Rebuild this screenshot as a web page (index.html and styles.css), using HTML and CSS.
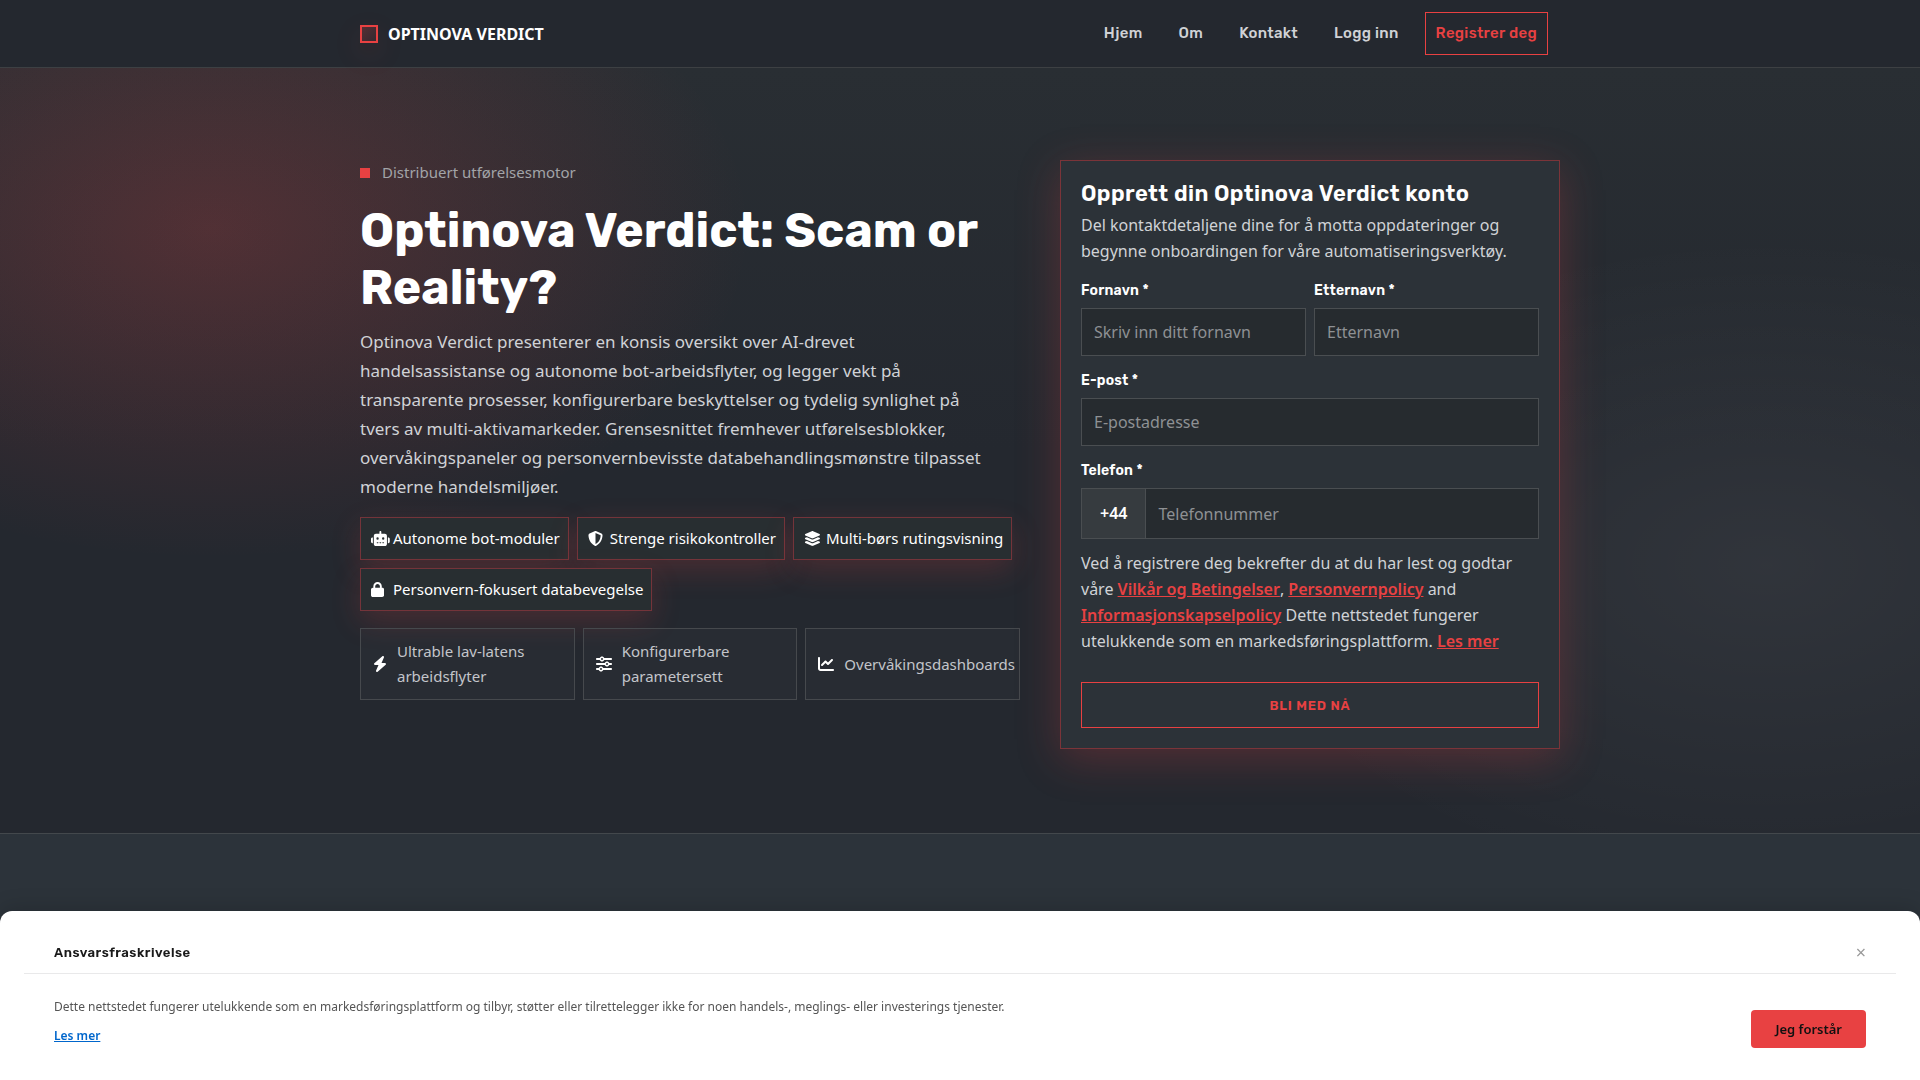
FILE: index.html
```html
<!DOCTYPE html>
<html lang="no">
<head>
    <meta charset="UTF-8">
    <meta name="viewport" content="width=device-width, initial-scale=1.0">
    <title>Optinova Verdict</title>
    <link rel="stylesheet" href="styles.css">
</head>
<body>
    <header class="site-header">
        <div class="container header-inner">
            <a class="brand" href="#"><span class="brand-mark"></span>OPTINOVA VERDICT</a>
            <nav class="nav">
                <a href="#">Hjem</a>
                <a href="#">Om</a>
                <a href="#">Kontakt</a>
                <a href="#">Logg inn</a>
                <a class="nav-cta" href="#signup">Registrer deg</a>
            </nav>
        </div>
    </header>

    <main>
        <section class="hero">
            <div class="container hero-grid">
                <div class="hero-content">
                    <div class="eyebrow">Distribuert utførelsesmotor</div>
                    <h1>Optinova Verdict: Scam or Reality?</h1>
                    <p class="lead">Optinova Verdict presenterer en konsis oversikt over AI-drevet handelsassistanse og autonome bot-arbeidsflyter, og legger vekt på transparente prosesser, konfigurerbare beskyttelser og tydelig synlighet på tvers av multi-aktivamarkeder. Grensesnittet fremhever utførelsesblokker, overvåkingspaneler og personvernbevisste databehandlingsmønstre tilpasset moderne handelsmiljøer.</p>
                    <ul class="chips">
                        <li>
                            <span class="chip-icon"><svg class="icon" viewBox="0 0 640 512"><path d="M320 0c17.7 0 32 14.3 32 32V96H472c39.8 0 72 32.2 72 72V440c0 39.8-32.2 72-72 72H168c-39.8 0-72-32.2-72-72V168c0-39.8 32.2-72 72-72H288V32c0-17.7 14.3-32 32-32zM208 384c-8.8 0-16 7.2-16 16s7.2 16 16 16h32c8.8 0 16-7.2 16-16s-7.2-16-16-16H208zm96 0c-8.8 0-16 7.2-16 16s7.2 16 16 16h32c8.8 0 16-7.2 16-16s-7.2-16-16-16H304zm96 0c-8.8 0-16 7.2-16 16s7.2 16 16 16h32c8.8 0 16-7.2 16-16s-7.2-16-16-16H400zM264 256a40 40 0 1 0 -80 0 40 40 0 1 0 80 0zm152 40a40 40 0 1 0 0-80 40 40 0 1 0 0 80zM48 224H64V416H48c-26.5 0-48-21.5-48-48V272c0-26.5 21.5-48 48-48zm544 0c26.5 0 48 21.5 48 48v96c0 26.5-21.5 48-48 48H576V224h16z"/></svg></span>
                            Autonome bot-moduler
                        </li>
                        <li>
                            <span class="chip-icon"><svg class="icon" viewBox="0 0 512 512"><path d="M256 0c4.6 0 9.2 1 13.4 2.9L457.7 82.8c22 9.3 38.4 31 38.3 57.2c-.5 99.2-41.3 280.7-213.6 363.2c-16.7 8-36.1 8-52.8 0C57.3 420.7 16.5 239.2 16 140c-.1-26.2 16.3-47.9 38.3-57.2L242.7 2.9C246.8 1 251.4 0 256 0zm0 66.8V444.8C394 378 431.1 230.1 432 141.4L256 66.8z"/></svg></span>
                            Strenge risikokontroller
                        </li>
                        <li>
                            <span class="chip-icon"><svg class="icon" viewBox="0 0 576 512"><path d="M264.5 5.2c14.9-6.9 32.1-6.9 47 0l218.6 101c8.5 3.9 13.9 12.4 13.9 21.8s-5.4 17.9-13.9 21.8l-218.6 101c-14.9 6.9-32.1 6.9-47 0L45.9 149.8C37.4 145.8 32 137.3 32 128s5.4-17.9 13.9-21.8L264.5 5.2zM476.9 209.6l53.2 24.6c8.5 3.9 13.9 12.4 13.9 21.8s-5.4 17.9-13.9 21.8l-218.6 101c-14.9 6.9-32.1 6.9-47 0L45.9 277.8C37.4 273.8 32 265.3 32 256s5.4-17.9 13.9-21.8l53.2-24.6 152 70.2c23.4 10.8 50.4 10.8 73.8 0l152-70.2zm-152 198.2l152-70.2 53.2 24.6c8.5 3.9 13.9 12.4 13.9 21.8s-5.4 17.9-13.9 21.8l-218.6 101c-14.9 6.9-32.1 6.9-47 0L45.9 405.8C37.4 401.8 32 393.3 32 384s5.4-17.9 13.9-21.8l53.2-24.6 152 70.2c23.4 10.8 50.4 10.8 73.8 0z"/></svg></span>
                            Multi-børs rutingsvisning
                        </li>
                        <li>
                            <span class="chip-icon"><svg class="icon" viewBox="0 0 448 512"><path d="M144 144v48H304V144c0-44.2-35.8-80-80-80s-80 35.8-80 80zM80 192V144C80 64.5 144.5 0 224 0s144 64.5 144 144v48h16c35.3 0 64 28.7 64 64V448c0 35.3-28.7 64-64 64H64c-35.3 0-64-28.7-64-64V256c0-35.3 28.7-64 64-64H80z"/></svg></span>
                            Personvern-fokusert databevegelse
                        </li>
                    </ul>
                    <div class="features">
                        <div class="feature">
                            <svg class="icon" viewBox="0 0 448 512"><path d="M349.4 44.6c5.9-13.7 1.5-29.7-10.6-38.5s-28.6-8-39.9 1.8l-256 224c-10 8.8-13.6 22.9-8.9 35.3S50.7 288 64 288H175.5L98.6 467.4c-5.9 13.7-1.5 29.7 10.6 38.5s28.6 8 39.9-1.8l256-224c10-8.8 13.6-22.9 8.9-35.3s-16.6-20.7-30-20.7H272.5L349.4 44.6z"/></svg>
                            <span>Ultrable lav-latens arbeidsflyter</span>
                        </div>
                        <div class="feature">
                            <svg class="icon" viewBox="0 0 512 512"><path d="M0 416c0 17.7 14.3 32 32 32l54.7 0c12.3 28.3 40.5 48 73.3 48s61-19.7 73.3-48L480 448c17.7 0 32-14.3 32-32s-14.3-32-32-32l-246.7 0c-12.3-28.3-40.5-48-73.3-48s-61 19.7-73.3 48L32 384c-17.7 0-32 14.3-32 32zm128 0a32 32 0 1 1 64 0 32 32 0 1 1 -64 0zM320 256a32 32 0 1 1 64 0 32 32 0 1 1 -64 0zm32-80c-32.8 0-61 19.7-73.3 48L32 224c-17.7 0-32 14.3-32 32s14.3 32 32 32l246.7 0c12.3 28.3 40.5 48 73.3 48s61-19.7 73.3-48l54.7 0c17.7 0 32-14.3 32-32s-14.3-32-32-32l-54.7 0c-12.3-28.3-40.5-48-73.3-48zM192 128a32 32 0 1 1 0-64 32 32 0 1 1 0 64zm73.3-64C253 35.7 224.8 16 192 16s-61 19.7-73.3 48L32 64C14.3 64 0 78.3 0 96s14.3 32 32 32l86.7 0c12.3 28.3 40.5 48 73.3 48s61-19.7 73.3-48L480 128c17.7 0 32-14.3 32-32s-14.3-32-32-32L265.3 64z"/></svg>
                            <span>Konfigurerbare parametersett</span>
                        </div>
                        <div class="feature">
                            <svg class="icon" viewBox="0 0 512 512"><path d="M64 64c0-17.7-14.3-32-32-32S0 46.3 0 64V400c0 44.2 35.8 80 80 80H480c17.7 0 32-14.3 32-32s-14.3-32-32-32H80c-8.8 0-16-7.2-16-16V64zm406.6 86.6c12.5-12.5 12.5-32.8 0-45.3s-32.8-12.5-45.3 0L320 210.7l-57.4-57.4c-12.5-12.5-32.8-12.5-45.3 0l-112 112c-12.5 12.5-12.5 32.8 0 45.3s32.8 12.5 45.3 0L240 221.3l57.4 57.4c12.5 12.5 32.8 12.5 45.3 0l128-128z"/></svg>
                            <span>Overvåkingsdashboards</span>
                        </div>
                    </div>
                </div>

                <form class="signup" id="signup">
                    <h2>Opprett din Optinova Verdict konto</h2>
                    <p class="signup-intro">Del kontaktdetaljene dine for å motta oppdateringer og begynne onboardingen for våre automatiseringsverktøy.</p>
                    <div class="form-row">
                        <div class="form-group">
                            <label for="firstName">Fornavn *</label>
                            <input type="text" id="firstName" placeholder="Skriv inn ditt fornavn" required>
                        </div>
                        <div class="form-group">
                            <label for="lastName">Etternavn *</label>
                            <input type="text" id="lastName" placeholder="Etternavn" required>
                        </div>
                    </div>
                    <div class="form-group">
                        <label for="email">E-post *</label>
                        <input type="email" id="email" placeholder="E-postadresse" required>
                    </div>
                    <div class="form-group">
                        <label for="phone">Telefon *</label>
                        <div class="phone">
                            <span class="phone-code">+44</span>
                            <input type="tel" id="phone" placeholder="Telefonnummer" required>
                        </div>
                    </div>
                    <p class="terms">Ved å registrere deg bekrefter du at du har lest og godtar våre <a href="#">Vilkår og Betingelser</a>, <a href="#">Personvernpolicy</a> and <a href="#">Informasjonskapselpolicy</a> Dette nettstedet fungerer utelukkende som en markedsføringsplattform. <a href="#">Les mer</a></p>
                    <button type="submit" class="submit">BLI MED NÅ</button>
                </form>
            </div>
        </section>
    </main>

    <div class="disclaimer" role="dialog" aria-labelledby="disclaimerTitle">
        <div class="disclaimer-head">
            <h3 id="disclaimerTitle">Ansvarsfraskrivelse</h3>
            <button type="button" class="close" aria-label="Lukk">×</button>
        </div>
        <div class="disclaimer-body">
            <div class="disclaimer-text">
                <p>Dette nettstedet fungerer utelukkende som en markedsføringsplattform og tilbyr, støtter eller tilrettelegger ikke for noen handels-, meglings- eller investerings tjenester.</p>
                <a href="#">Les mer</a>
            </div>
            <button type="button" class="accept">Jeg forstår</button>
        </div>
    </div>
</body>
</html>
```

FILE: styles.css
```css
* {
    box-sizing: border-box;
}
body {
    margin: 0;
    min-height: 100vh;
    font-family: "Noto Sans", sans-serif;
    font-size: 16px;
    color: #d0d2d6;
    background-color: #2c333a;
}
h1, h2, h3, p, ul {
    margin: 0;
    padding: 0;
}
h1, h2, h3, label, .nav, .submit {
    font-family: Rubik, Inter, sans-serif;
}
.container {
    max-width: 1200px;
    margin: 0 auto;
}

/* Header */
.site-header {
    background-color: #24282f;
    border-bottom: 1px solid #3d4043;
}
.header-inner {
    display: flex;
    align-items: center;
    justify-content: space-between;
    padding: 12px 12px 12px 0;
}
.brand {
    display: flex;
    align-items: center;
    gap: 10px;
    color: #fff;
    font-size: 16px;
    font-weight: 700;
    line-height: 24px;
    text-decoration: none;
}
.brand-mark {
    width: 18px;
    height: 18px;
    border: 2px solid #e84142;
    background: linear-gradient(135deg, rgba(232, 65, 66, 0.25), rgba(232, 65, 66, 0.08));
    box-shadow: 0 10px 30px rgba(232, 65, 66, 0.14);
}
.nav {
    display: flex;
    align-items: center;
    gap: 16px;
}
.nav a {
    padding: 0 10px;
    color: #d0d2d6;
    font-size: 15px;
    font-weight: 500;
    line-height: 41px;
    letter-spacing: 0.3px;
    text-decoration: none;
}
.nav .nav-cta {
    border: 1px solid #e84142;
    color: #e84142;
}

/* Hero */
.hero {
    padding: 92px 0 84px;
    border-bottom: 1px solid #43484c;
    background:
        radial-gradient(540px 330px at 11% 21%, rgba(232, 65, 66, 0.22), transparent),
        radial-gradient(540px 330px at 92% 65%, rgba(255, 255, 255, 0.06), transparent),
        linear-gradient(180deg, #292e33, #24282f 50%, #24282f);
}
.hero-grid {
    display: grid;
    grid-template-columns: minmax(0, 33fr) minmax(0, 25fr);
    gap: 40px;
}
.eyebrow {
    display: flex;
    align-items: center;
    gap: 12px;
    color: #a2a4a8;
    font-size: 15px;
    line-height: 25px;
}
.eyebrow::before {
    content: "";
    width: 10px;
    height: 10px;
    background-color: #e84142;
}
h1 {
    margin-top: 17px;
    color: #fff;
    font-size: 48px;
    font-weight: 700;
    line-height: 57px;
}
.lead {
    max-width: 630px;
    margin-top: 11px;
    font-size: 17px;
    line-height: 29px;
}
.icon {
    display: block;
    flex: none;
    height: 16px;
    fill: #fff;
}
.chips {
    display: flex;
    flex-wrap: wrap;
    gap: 8px;
    margin-top: 16px;
    list-style: none;
}
.chips li {
    display: flex;
    align-items: center;
    gap: 7px;
    padding: 8px 8px 8px 10px;
    border: 1px solid #74343a;
    background-color: #282e31;
    box-shadow: 0 10px 30px rgba(232, 65, 66, 0.2);
    color: #fff;
    font-size: 15px;
    line-height: 25px;
}
.chip-icon {
    width: 15px;
}
.chip-icon .icon {
    height: 15px;
}
.features {
    display: grid;
    grid-template-columns: repeat(3, minmax(0, 1fr));
    gap: 8px;
    margin-top: 17px;
}
.feature {
    display: flex;
    align-items: center;
    gap: 10px;
    padding: 10px 12px;
    border: 1px solid #46494d;
    background-color: rgba(255, 255, 255, 0.02);
    font-size: 15px;
    line-height: 25px;
    color: #c3c5ca;
}

/* Sign-up form */
.signup {
    padding: 20px;
    border: 1px solid #7b3439;
    background-color: #2c3238;
    box-shadow: 0 10px 40px rgba(232, 65, 66, 0.25);
}
.signup h2 {
    color: #fff;
    font-size: 22px;
    font-weight: 600;
    line-height: 26px;
    letter-spacing: 0.4px;
}
.signup-intro {
    margin-top: 5px;
    font-size: 16px;
    line-height: 26px;
}
.form-row {
    display: grid;
    grid-template-columns: 1fr 1fr;
    gap: 8px;
    margin-top: 14px;
}
.form-group {
    margin-top: 12px;
}
.form-row .form-group {
    margin-top: 0;
}
label {
    display: block;
    margin-bottom: 4px;
    color: #fff;
    font-size: 14px;
    font-weight: 600;
    line-height: 26px;
    letter-spacing: 0.2px;
}
input {
    width: 100%;
    height: 48px;
    padding: 0 12px;
    border: 1px solid #4a4e51;
    border-radius: 0;
    background-color: #262b2f;
    color: #fff;
    font-family: inherit;
    font-size: 16px;
}
input::placeholder {
    color: #8e9194;
}
.phone {
    display: flex;
    border: 1px solid #4a4e51;
}
.phone-code {
    padding: 0 18px;
    border-right: 1px solid #4a4e51;
    background-color: #363b3f;
    color: #fff;
    font-size: 16px;
    font-weight: 600;
    line-height: 49px;
}
.phone input {
    flex: 1;
    height: auto;
    border: 0;
}
.terms {
    margin-top: 11px;
    font-size: 16px;
    line-height: 26px;
}
.terms a {
    color: #e84142;
    font-weight: 600;
}
.submit {
    display: block;
    width: 100%;
    height: 46px;
    margin-top: 28px;
    border: 1px solid #e84142;
    background: transparent;
    color: #e84142;
    font-size: 13px;
    font-weight: 600;
    letter-spacing: 0.8px;
}

/* Disclaimer sheet, stays over the page */
.disclaimer {
    position: fixed;
    right: 0;
    bottom: 0;
    left: 0;
    padding: 20px 24px 27px;
    border-radius: 12px 12px 0 0;
    background-color: #fff;
    box-shadow: 0 -4px 20px rgba(0, 0, 0, 0.15);
}
.disclaimer-head {
    display: flex;
    align-items: center;
    justify-content: space-between;
    height: 43px;
    padding: 0 30px;
    border-bottom: 1px solid #e9e9ea;
}
.disclaimer h3 {
    color: #1a1a1a;
    font-size: 13px;
    font-weight: 600;
    letter-spacing: 0.5px;
}
.close {
    padding: 0;
    border: 0;
    background: none;
    color: #999;
    font-family: inherit;
    font-size: 18px;
    line-height: 20px;
}
.disclaimer-body {
    display: flex;
    align-items: flex-end;
    justify-content: space-between;
    padding: 20px 30px 0;
}
.disclaimer-text {
    color: #555;
    font-size: 12px;
    line-height: 25px;
}
.disclaimer-text a {
    display: inline-block;
    color: #0066cc;
    font-weight: 600;
    line-height: 34px;
}
.accept {
    height: 38px;
    margin-bottom: 5px;
    padding: 0 24px;
    border: 0;
    border-radius: 4px;
    background-color: #e84142;
    color: #111;
    font-family: inherit;
    font-size: 13px;
    font-weight: 600;
}
```
